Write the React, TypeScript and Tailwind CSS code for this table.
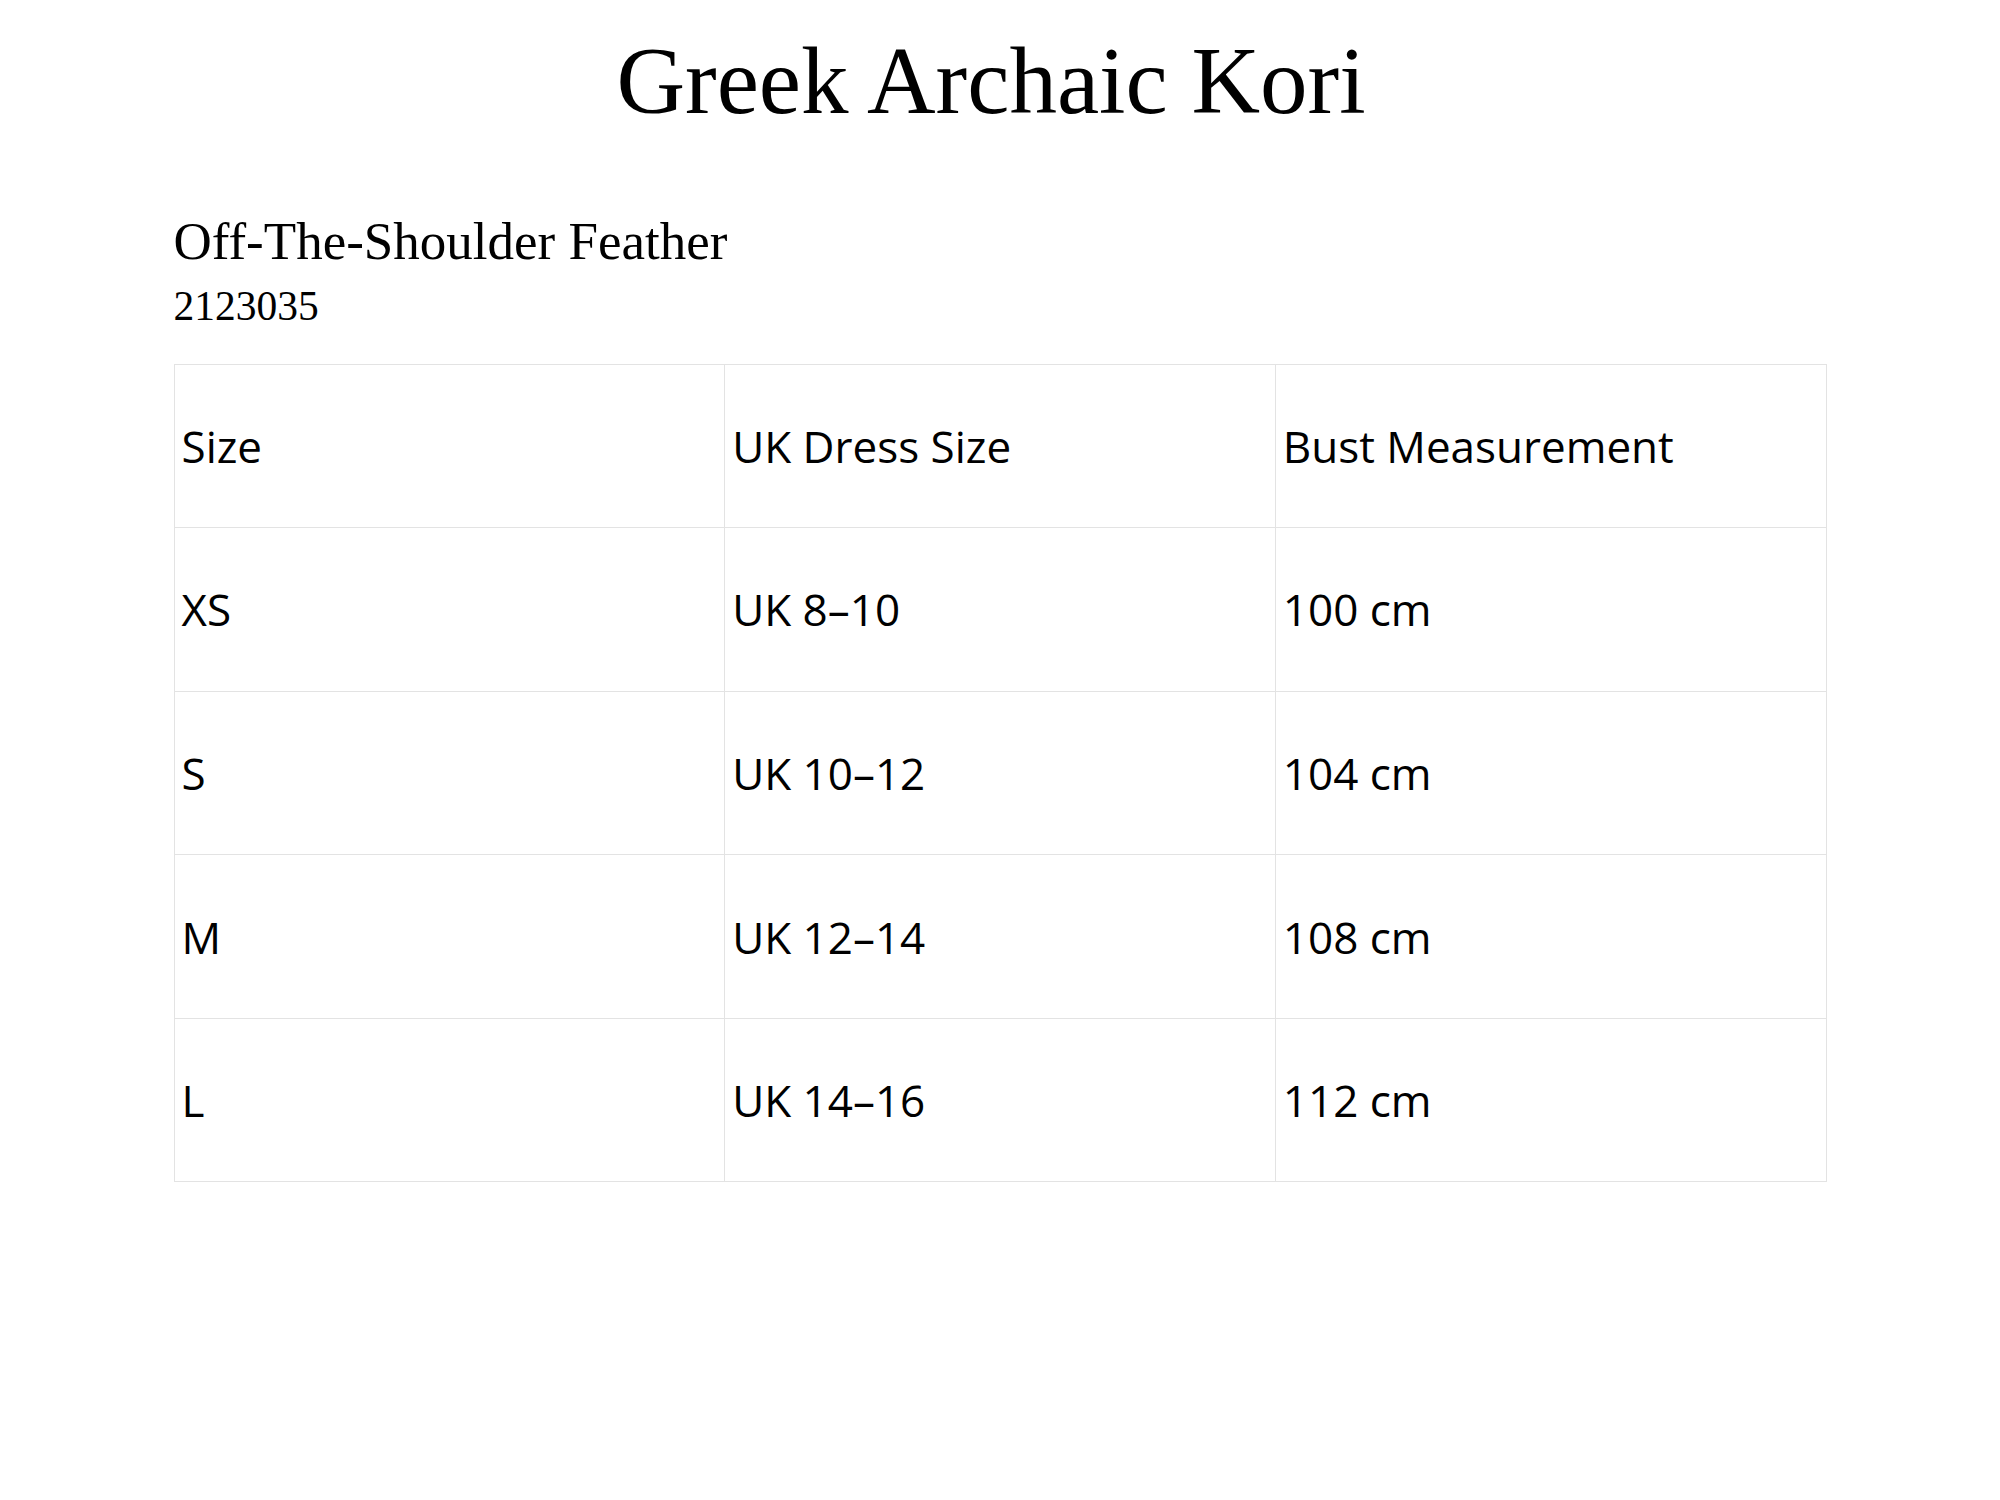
import React from "react";

const rows = [
  ["Size", "UK Dress Size", "Bust Measurement"],
  ["XS", "UK 8–10", "100 cm"],
  ["S", "UK 10–12", "104 cm"],
  ["M", "UK 12–14", "108 cm"],
  ["L", "UK 14–16", "112 cm"],
];

export default function App() {
  return (
    <div className="min-h-[1500px] w-[2000px] bg-white text-black">
      <div className="pt-[34px] pr-[18px] text-center font-['Liberation_Serif',serif] text-[95px] leading-none">
        Greek Archaic Kori
      </div>
      <div className="mx-auto w-[1653px]">
        <div className="mt-[86px] font-['Liberation_Serif',serif] text-[53px] leading-none">
          Off-The-Shoulder Feather
        </div>
        <div className="mt-[18px] font-['Liberation_Serif',serif] text-[41.5px] leading-none">
          2123035
        </div>
        <table className="mt-[36px] w-[1653px] table-fixed border-collapse font-['Open_Sans',sans-serif] text-[44px] leading-none">
          <tbody>
            {rows.map((r, i) => (
              <tr key={i} className="h-[163.6px]">
                {r.map((c, j) => (
                  <td
                    key={j}
                    className="border border-[#e3e3e3] pl-[7px] align-middle"
                  >
                    {c}
                  </td>
                ))}
              </tr>
            ))}
          </tbody>
        </table>
      </div>
    </div>
  );
}
